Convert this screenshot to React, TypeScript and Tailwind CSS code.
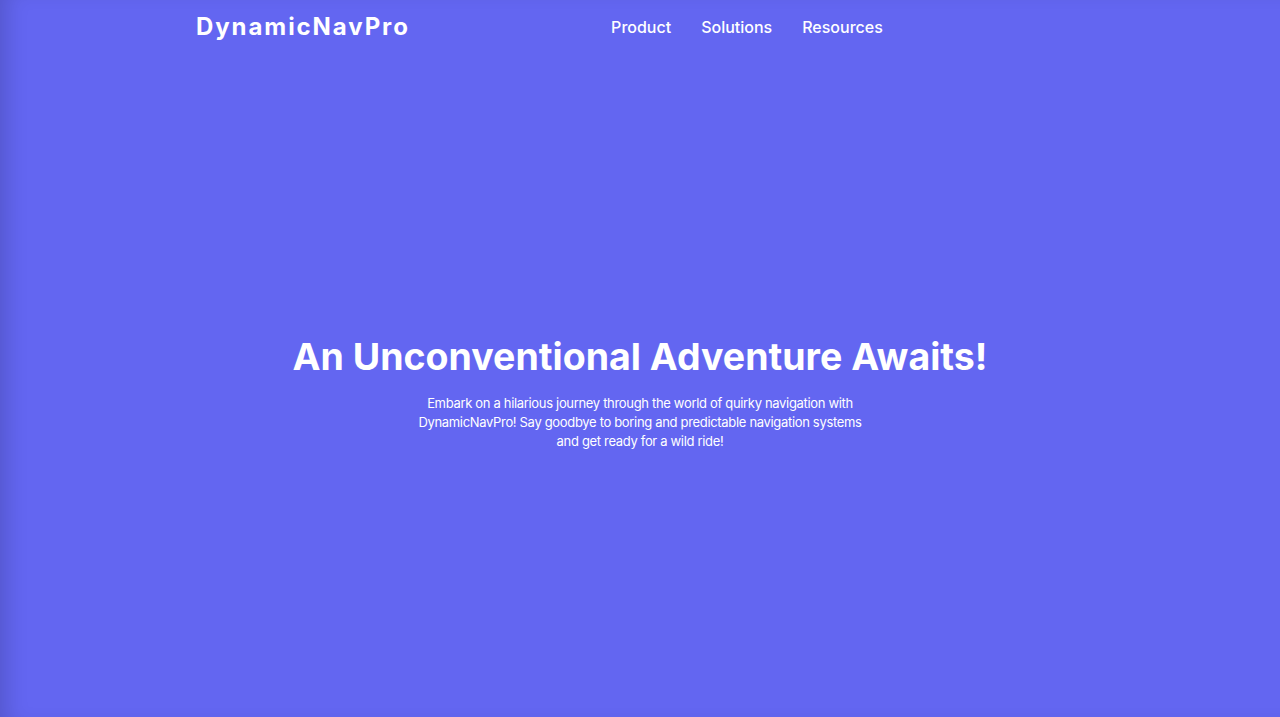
export default function App() {
  return (
    <div
      className="min-h-screen bg-[#6366f1] text-white shadow-[inset_18px_0_22px_-12px_rgba(0,0,0,0.16)]"
      style={{ fontFamily: 'Inter, "Noto Sans", sans-serif' }}
    >
      <header className="mx-auto flex h-[54px] max-w-4xl items-center justify-between px-1">
        <a href="#" className="text-2xl font-bold tracking-[0.08em]">DynamicNavPro</a>
        <nav className="flex items-center gap-[30px] text-base font-medium">
          <a href="#">Product</a>
          <a href="#">Solutions</a>
          <a href="#">Resources</a>
        </nav>
        <div />
      </header>

      <main className="flex flex-col items-center px-4 pt-[283px] pb-20 text-center">
        <h1 className="text-[37.5px] leading-10 font-bold">An Unconventional Adventure Awaits!</h1>
        <p className="mt-[17px] max-w-[452px] text-[13px] leading-[19px] tracking-tight">
          Embark on a hilarious journey through the world of quirky navigation with DynamicNavPro! Say goodbye to
          boring and predictable navigation systems and get ready for a wild ride!
        </p>
      </main>
    </div>
  );
}
